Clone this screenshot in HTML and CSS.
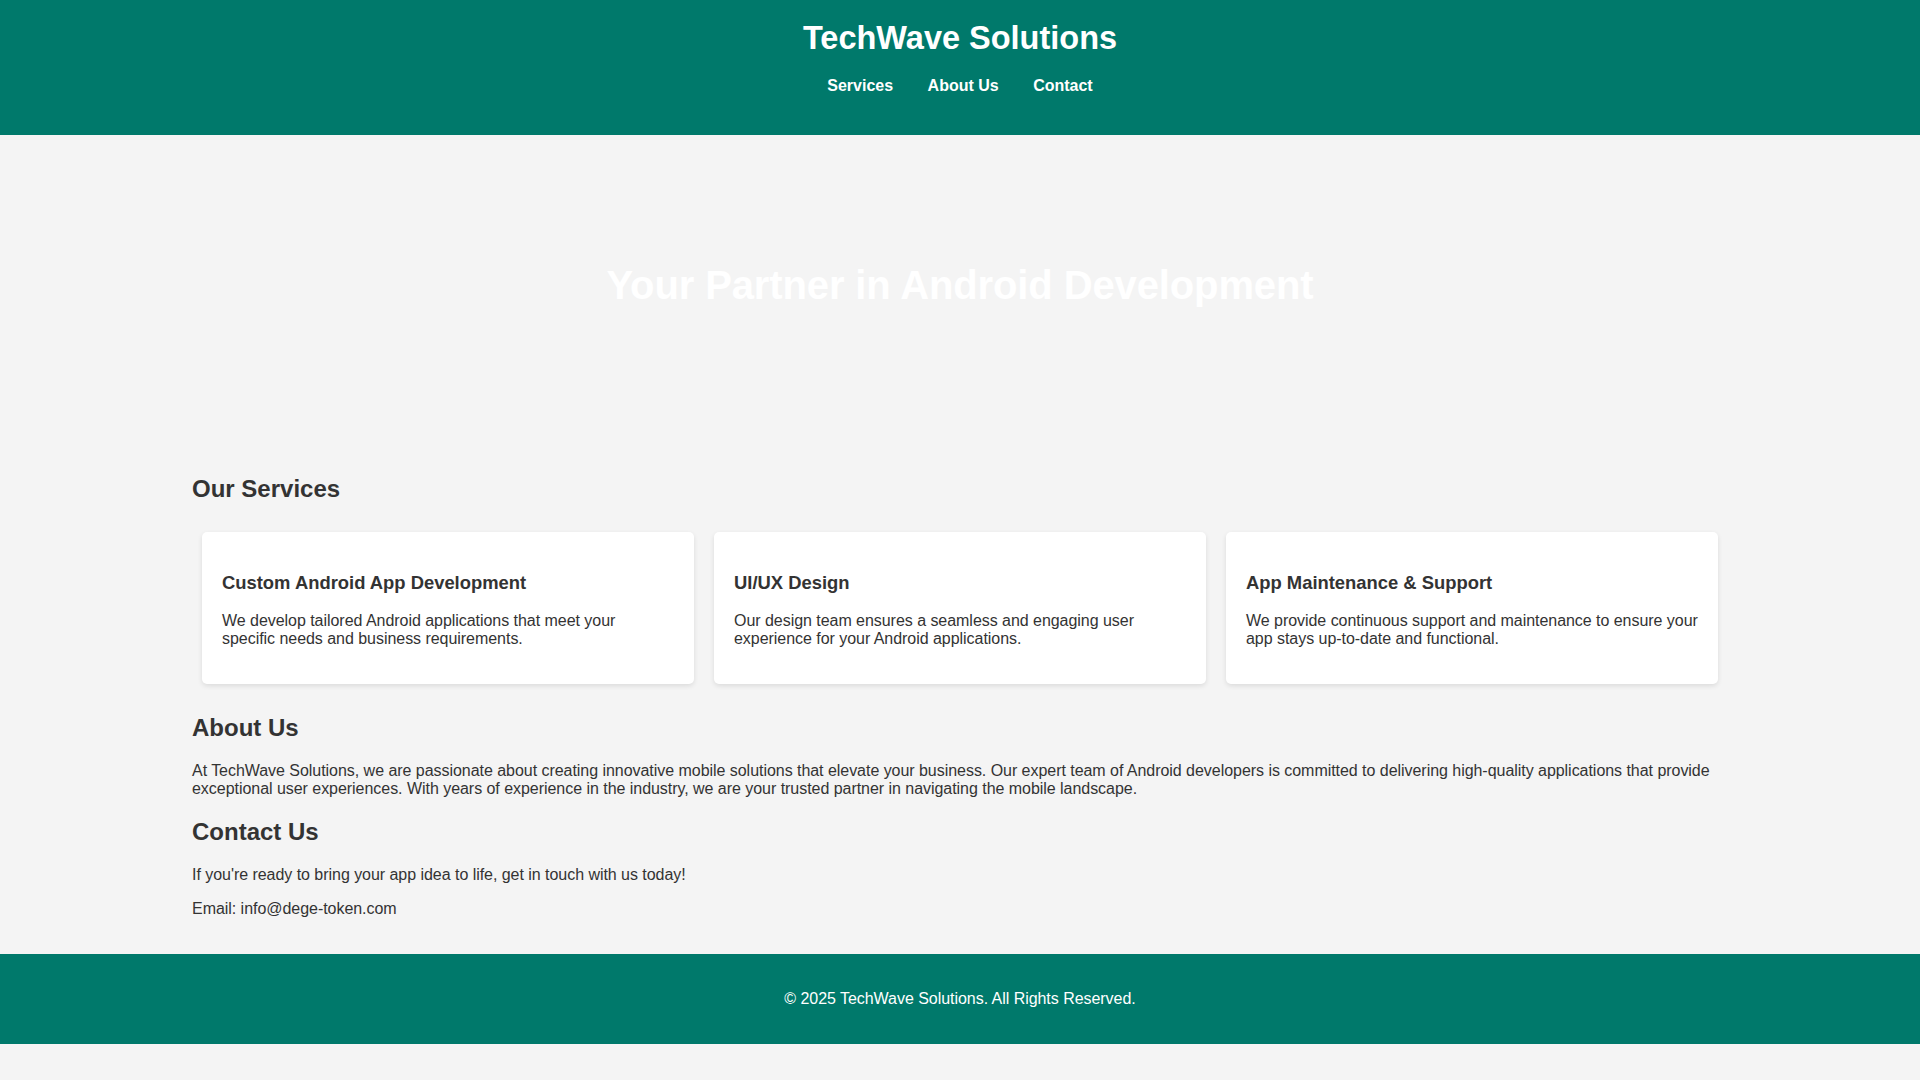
FILE: index.html
```html
<!DOCTYPE html>
<html lang="en">
<head>
<meta charset="utf-8">
<title>TechWave Solutions</title>
<link rel="stylesheet" href="styles.css">
</head>
<body>
<header class="site-header">
  <h1 class="brand">TechWave Solutions</h1>
  <nav class="nav">
    <a href="#services">Services</a>
    <a href="#about">About Us</a>
    <a href="#contact">Contact</a>
  </nav>
</header>
<section class="hero">
  <h1 class="hero-title">Your Partner in Android Development</h1>
</section>
<main class="main">
  <section id="services">
    <h2>Our Services</h2>
    <div class="cards">
      <div class="card">
        <h3>Custom Android App Development</h3>
        <p>We develop tailored Android applications that meet your<br>specific needs and business requirements.</p>
      </div>
      <div class="card">
        <h3>UI/UX Design</h3>
        <p>Our design team ensures a seamless and engaging user experience for your Android applications.</p>
      </div>
      <div class="card">
        <h3>App Maintenance &amp; Support</h3>
        <p>We provide continuous support and maintenance to ensure your app stays up-to-date and functional.</p>
      </div>
    </div>
  </section>
  <section id="about">
    <h2>About Us</h2>
    <p>At TechWave Solutions, we are passionate about creating innovative mobile solutions that elevate your business. Our expert team of Android developers is committed to delivering high-quality applications that provide exceptional user experiences. With years of experience in the industry, we are your trusted partner in navigating the mobile landscape.</p>
  </section>
  <section id="contact">
    <h2>Contact Us</h2>
    <p>If you're ready to bring your app idea to life, get in touch with us today!</p>
    <p>Email: info@dege-token.com</p>
  </section>
</main>
<footer class="site-footer">
  <p>&copy; 2025 TechWave Solutions. All Rights Reserved.</p>
</footer>
</body>
</html>
```

FILE: styles.css
```css
body {
  margin: 0;
  font-family: "Liberation Sans", Arial, sans-serif;
  background: #f4f4f4;
  color: #333;
}

p {
  letter-spacing: -0.04px;
}

.site-header {
  background: #00796b;
  color: #fff;
  text-align: center;
  padding: 20px 0;
}

.brand {
  margin: 0;
  font-size: 32.5px;
  line-height: 36.8px;
}

.nav {
  margin: 20px 0;
}

.nav a {
  color: #fff;
  font-weight: bold;
  text-decoration: none;
  margin: 0 15px;
}

.hero {
  padding: 100px 20px;
  text-align: center;
  color: #fff;
}

.hero-title {
  font-size: 40px;
  letter-spacing: -0.12px;
  margin: 28px 0 26.8px;
}

.main {
  width: 80%;
  margin: 0 auto;
  padding: 20px 0;
}

.main h2 {
  font-size: 24px;
  margin: 19.92px 0;
}

.cards {
  display: flex;
}

.card {
  flex: 1;
  background: #fff;
  margin: 10px;
  padding: 20px;
  border-radius: 5px;
  box-shadow: 0 2px 5px rgba(0, 0, 0, 0.1);
}

.card h3 {
  font-size: 18.4px;
  margin: 20px 0 17.5px;
}

.site-footer {
  background: #00796b;
  color: #fff;
  text-align: center;
  padding: 20px 0;
}
```
